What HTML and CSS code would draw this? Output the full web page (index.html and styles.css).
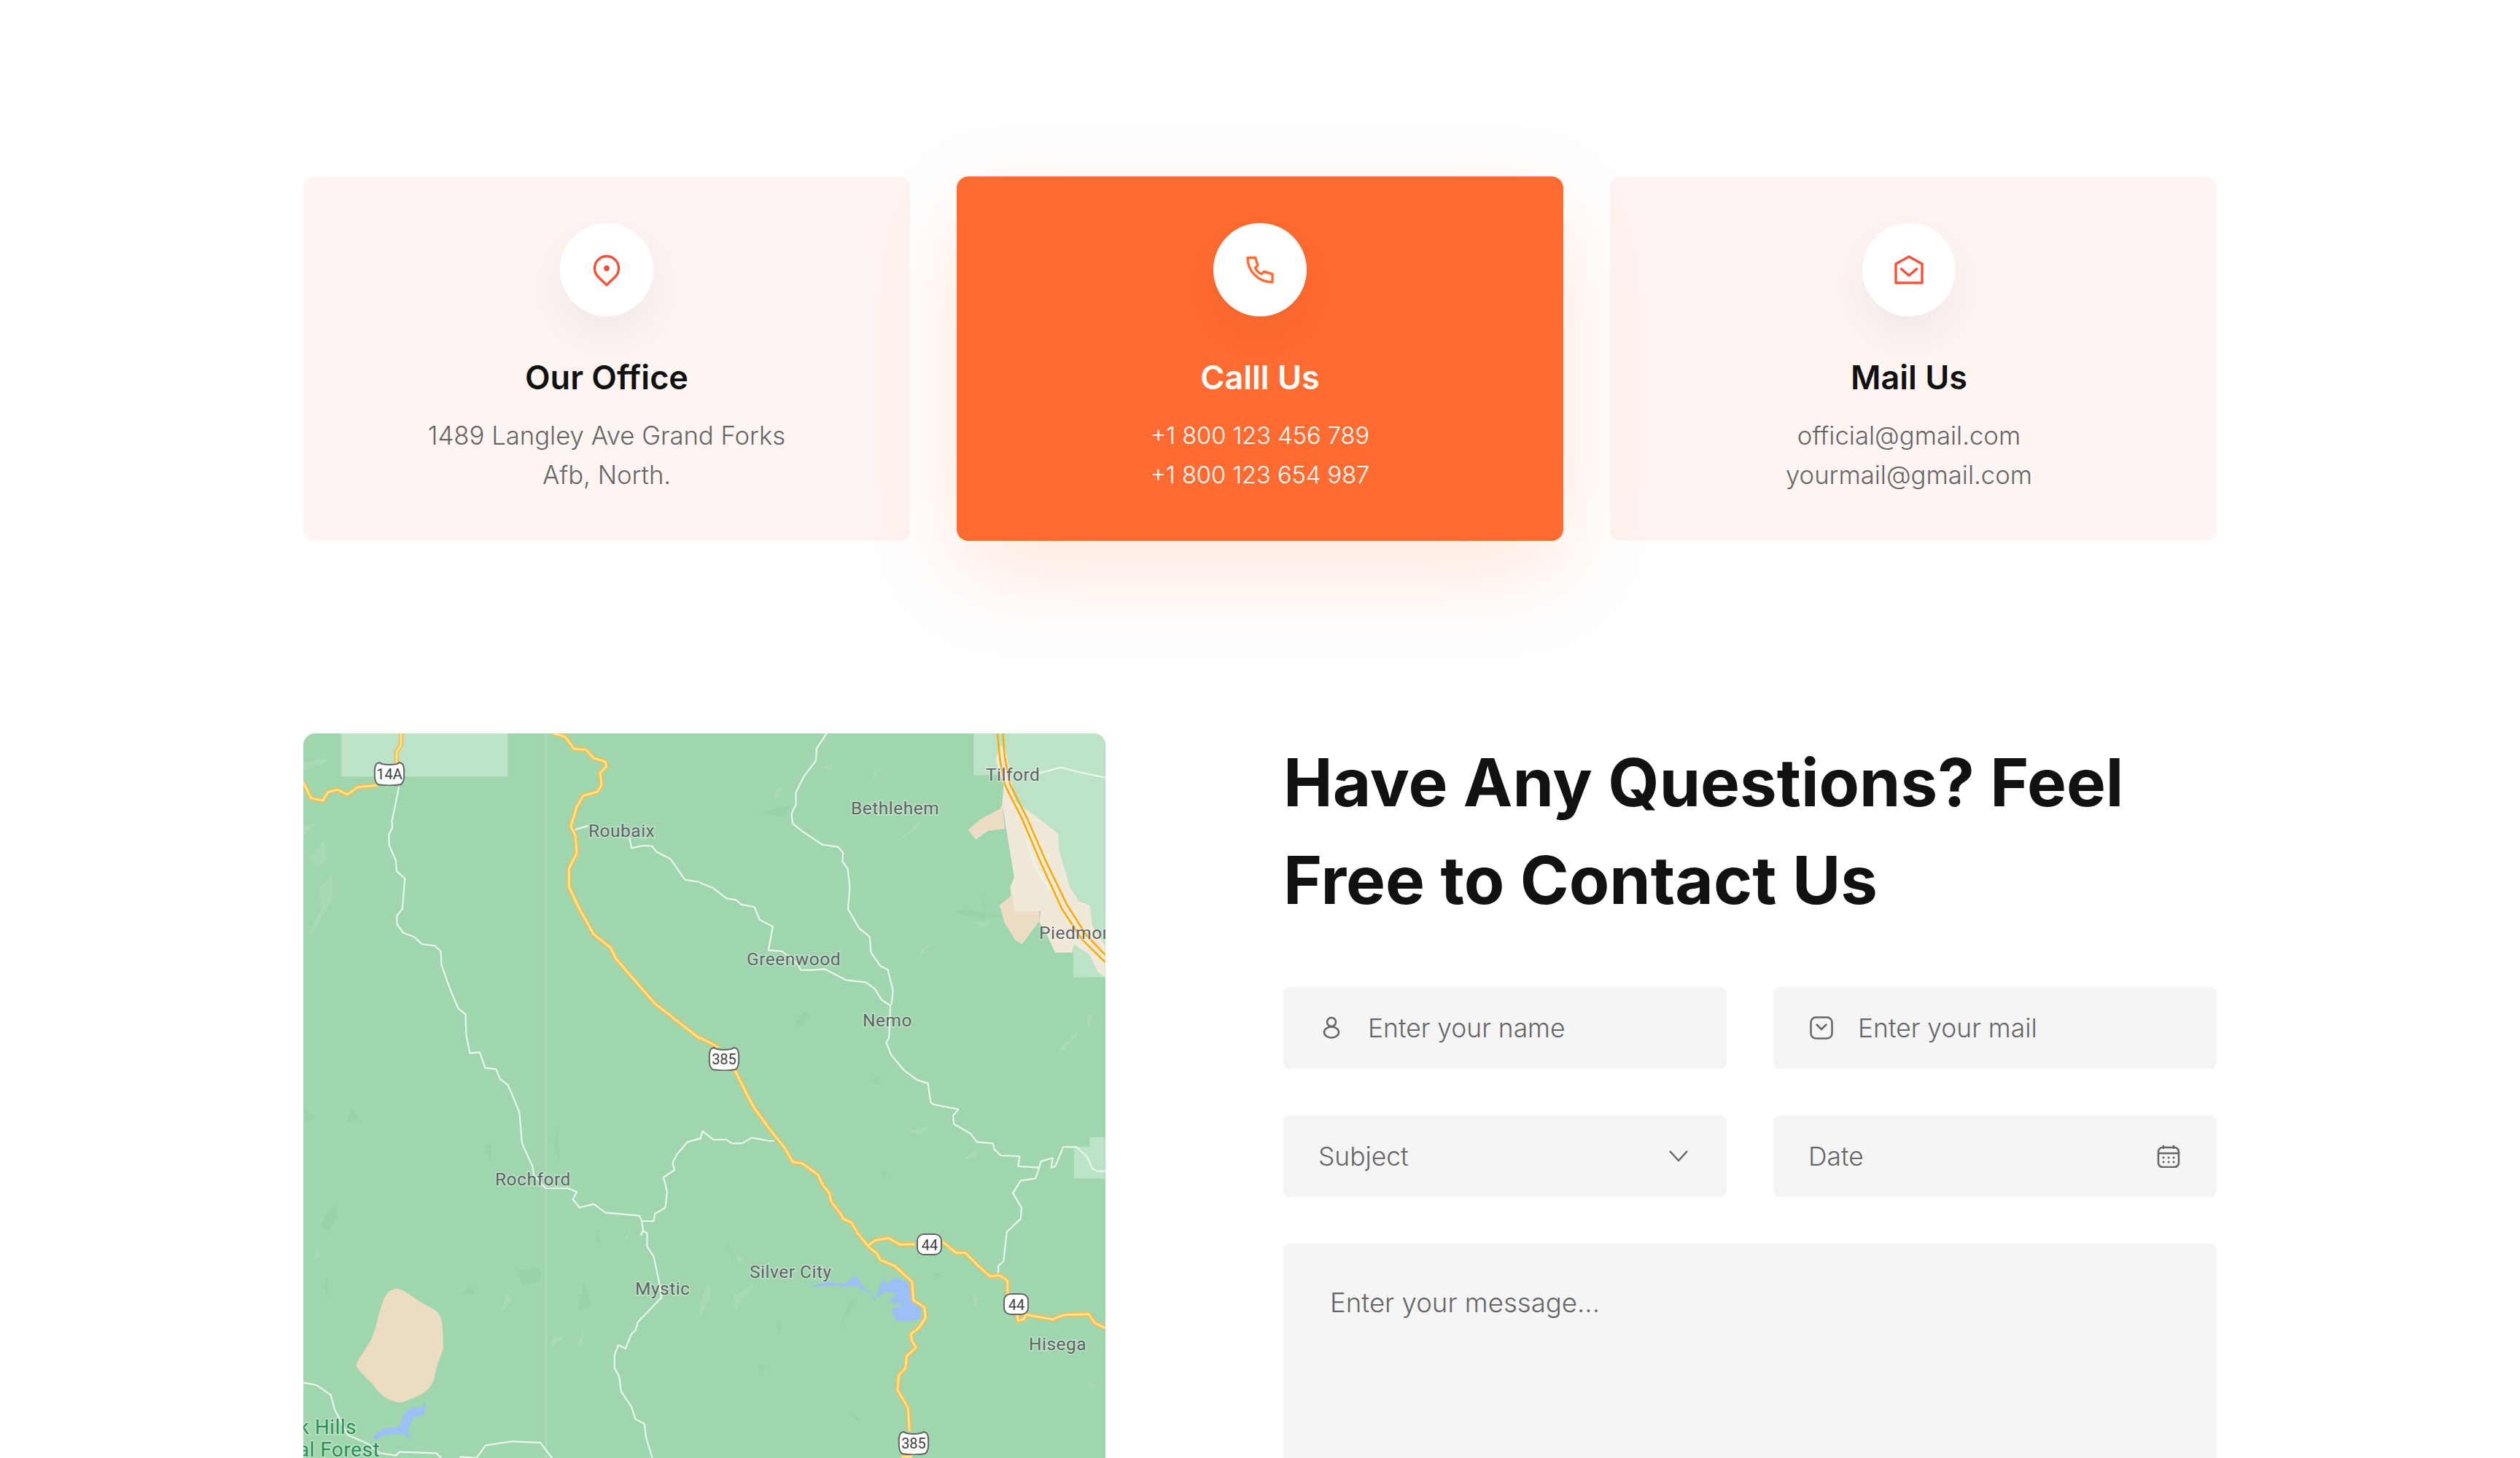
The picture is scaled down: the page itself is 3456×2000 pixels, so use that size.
FILE: index.html

```html
<!doctype html>
<html>
<head>
    <title>Contact</title>
    <meta charset="utf-8" />
    <link rel="stylesheet" href="styles.css">
</head>
<body>
<div id="container">

    <div class="cards">
        <div class="card">
            <div class="circle">
                <svg class="big-icon" viewBox="0 0 48 48"><path d="M24 45 L12.4 33.8 A16.5 16.5 0 1 1 35.6 33.8 Z"/><circle class="dot" cx="24" cy="22" r="4"/></svg>
            </div>
            <h3>Our Office</h3>
            <p>1489 Langley Ave Grand Forks<br />Afb, North.</p>
        </div>
        <div class="card active">
            <div class="circle">
                <svg class="big-icon" viewBox="0 0 48 48"><path d="M7 7.5 H17.5 L21 18 L17.5 21.5 C19 25 23 29 26 30 L29.5 26.5 L41 30 V41 C22 41 7 26 7 7.5 Z"/></svg>
            </div>
            <h3>Calll Us</h3>
            <p>+1 800 123 456 789<br />+1 800 123 654 987</p>
        </div>
        <div class="card last">
            <div class="circle">
                <svg class="big-icon" viewBox="0 0 48 48"><path d="M24 6 L6 16 V42 H42 V16 Z"/><path d="M12.5 22 L24 32 L35.5 22"/></svg>
            </div>
            <h3>Mail Us</h3>
            <p>official@gmail.com<br />yourmail@gmail.com</p>
        </div>
    </div>

    <div class="contact">
        <div class="map">
            <svg viewBox="416 1006 1100 994">
                <defs>
                    <g id="yellow-roads">
                        <g transform="translate(400 990) scale(.3571 .3333)">
                            <path d="M45 250 L75 315 L120 325 L140 290 L175 280 L215 300 L255 268 L330 262"/>
                            <path d="M420 48 L420 95 L403 125 L403 170"/>
                            <path d="M1005 48 L1050 62 L1085 112 L1130 115 L1160 150 L1205 165 L1208 185 L1185 210 L1190 260 L1175 288 L1120 305 L1095 350 L1072 430 L1090 470 L1095 540 L1065 605 L1065 680 L1105 770 L1160 875 L1225 930 L1245 975 L1395 1160 L1568 1305"/>
                        </g>
                        <g transform="translate(960 990) scale(.3636 .3333)">
                            <path d="M0 1300 L70 1340"/>
                            <path d="M130 1430 L175 1530"/>
                        </g>
                        <g transform="translate(960 1500) scale(.3636 .3333)">
                            <path d="M175 0 L205 60 L265 150 L320 225 L350 282 L385 287 L445 335 L465 380 L488 410 L495 445 L530 495 L540 515 L570 530 L595 575 L635 630 L668 660 L680 685 L735 710 L800 775 L805 850 L847 880 L850 925 L825 965 L795 990 L800 1020 L815 1045 L780 1080 L775 1130 L750 1160 L745 1220 L785 1295 L790 1390"/>
                            <path d="M635 625 L660 605 L710 595 L755 622 L810 620"/>
                            <path d="M915 610 L965 655 L1000 655 L1050 710 L1095 753 L1130 748 L1160 770 L1160 830"/>
                            <path d="M1195 910 L1200 935 L1220 930 L1230 910 L1330 930 L1370 912 L1465 908 L1490 945 L1528 965"/>
                            <path d="M760 1495 L800 1495"/>
                        </g>
                    </g>
                    <symbol id="us-shield" viewBox="0 0 44 33">
                        <path d="M4 3 L8 1 L12 3 Q22 5 32 3 L36 1 L40 3 Q43 8 42 16 Q43 26 38 31 Q22 34 6 31 Q1 26 2 16 Q1 8 4 3 Z"/>
                    </symbol>
                </defs>

                <rect class="land" x="416" y="1006" width="1100" height="994"/>

                <!-- top left -->
                <g transform="translate(400 990) scale(.3571 .3333)">
                    <rect class="park" x="190" y="48" width="640" height="178"/>
                    <polygon class="pale" points="45,170 130,150 135,165 45,205"/>
                    <polygon class="pale" points="70,560 125,490 135,570 95,600"/>
                    <polygon class="pale" points="155,625 155,730 75,880 70,860 115,770 105,690"/>
                    <polygon class="pale" points="45,430 100,420 45,465"/>
                </g>
                <!-- top right -->
                <g transform="translate(960 990) scale(.3636 .3333)">
                    <polygon class="park" points="1032,48 1528,48 1528,1052 1408,1052 1408,915 1240,700 1150,220 1032,220"/>
                    <polygon class="town" points="1115,160 1130,100 1150,100 1190,330 1280,400 1350,460 1355,530 1395,680 1430,740 1470,755 1480,840 1528,920 1528,1050 1500,1030 1470,960 1410,915 1405,950 1340,950 1310,880 1280,825 1285,780 1180,780 1170,680 1185,640 1155,440 1140,340 1145,260"/>
                    <polygon class="sand" points="1012,445 1060,400 1130,360 1140,340 1150,440 1085,450 1040,485"/>
                    <polygon class="sand" points="1130,755 1180,710 1185,780 1280,780 1280,820 1240,880 1215,915 1190,900 1150,830"/>
                    <polygon class="pale" points="455,185 505,175 495,205"/>
                    <polygon class="pale" points="655,200 685,198 650,245"/>
                    <polygon class="pale" points="285,280 320,262 280,330"/>
                    <polygon class="dark" points="230,375 345,340 310,390"/>
                    <polygon class="pale" points="790,450 835,400 820,440 720,510"/>
                    <polygon class="dark" points="960,785 1000,770 1140,800 1060,810"/>
                    <polygon class="dark" points="1050,700 1085,770 1070,760"/>
                    <polygon class="pale" points="1030,825 1100,822 1080,852"/>
                    <polygon class="pale" points="835,935 875,910 830,970"/>
                    <polygon class="dark" points="350,1250 395,1190 420,1215 365,1258"/>
                    <polygon class="pale" points="1360,1340 1430,1265 1425,1290 1350,1375"/>
                    <polygon class="pale" points="1458,1210 1485,1200 1465,1265"/>
                    <polygon class="dark" points="640,1470 680,1460 665,1495"/>
                </g>
                <!-- bottom left -->
                <g transform="translate(400 1500) scale(.3571 .3333)">
                    <polygon class="dark" points="205,125 235,55 262,110"/>
                    <polygon class="dark" points="45,60 90,100 50,120"/>
                    <polygon class="dark" points="110,535 170,455 170,510 140,575"/>
                    <polygon class="pale" points="85,690 95,625 108,670"/>
                    <polygon class="dark" points="120,790 135,750 145,850"/>
                    <polygon class="dark" points="650,825 698,795 700,830"/>
                    <polygon class="dark" points="865,730 955,715 955,770 890,790"/>
                    <polygon class="pale" points="805,900 825,820 845,850"/>
                    <polygon class="dark" points="1165,600 1175,555 1190,620"/>
                    <polygon class="pale" points="1275,610 1308,535 1290,600"/>
                    <polygon class="dark" points="1100,895 1120,770 1150,875"/>
                    <polygon class="pale" points="997,1045 1002,1005 1055,995"/>
                    <polygon class="pale" points="1097,1040 1125,955 1115,1045"/>
                    <polygon class="dark" points="740,215 765,205 765,290"/>
                    <polygon class="dark" points="1020,145 1030,300 1005,200"/>
                    <path class="blob" d="M400 803 C440 805 470 850 550 890 C578 915 582 940 582 1050 C570 1090 555 1120 550 1165 C535 1220 510 1240 420 1272 C370 1270 330 1230 315 1200 C290 1170 250 1140 248 1115 C260 1080 300 1040 320 970 C345 880 350 810 400 803 Z"/>
                    <polygon class="water" points="310,1415 350,1380 415,1370 430,1320 460,1290 500,1295 512,1272 518,1280 505,1325 470,1330 445,1380 458,1425 430,1400 350,1408 320,1428"/>
                </g>
                <!-- bottom right -->
                <g transform="translate(960 1500) scale(.3636 .3333)">
                    <polygon class="park" points="1410,350 1528,350 1528,180 1470,180 1470,220 1410,220"/>
                    <polygon class="pale" points="125,840 210,778 135,890"/>
                    <polygon class="pale" points="0,860 35,770 40,840 0,925"/>
                    <polygon class="pale" points="790,155 865,138 825,170"/>
                    <polygon class="pale" points="995,270 1048,228 1040,262"/>
                    <polygon class="dark" points="530,960 565,845 590,850 570,890"/>
                    <polygon class="dark" points="97,600 130,680 115,675"/>
                    <polygon class="pale" points="140,660 165,680 145,705"/>
                    <polygon class="dark" points="875,740 915,735 895,768"/>
                    <polygon class="pale" points="1030,825 1052,850 1035,890"/>
                    <polygon class="pale" points="1465,1190 1510,1200 1465,1220"/>
                    <polygon class="dark" points="222,1145 228,1110 248,1135"/>
                    <polygon class="dark" points="560,1320 580,1315 615,1360"/>
                    <polygon class="dark" points="290,935 310,935 300,1000"/>
                    <polygon class="dark" points="683,310 710,325 685,350"/>
                    <polygon class="water" points="405,760 430,790 480,775 540,785 590,750 610,790 665,845 680,790 695,760 705,790 735,755 785,780 800,850 835,880 830,930 750,940 725,910 725,885 770,870 710,855 745,825 700,815 660,850 640,825 585,790 540,795 480,790 430,795"/>
                </g>

                <!-- county line -->
                <path class="boundary" d="M749 1006 V2000"/>

                <!-- small roads -->
                <g class="road-white">
                    <g transform="translate(400 990) scale(.3571 .3333)">
                        <path d="M412 268 L385 410 L387 435 L373 465 L375 510 L400 570 L403 615 L435 645 L425 770 L403 800 L405 835 L430 870 L470 885 L500 915 L550 922 L573 945 L575 1000 L610 1105 L640 1180 L668 1205 L670 1290 L685 1365 L722 1360 L743 1425 L785 1430 L800 1470 L830 1495 L845 1530"/>
                        <path d="M1088 445 L1140 428"/>
                        <path d="M1297 475 L1305 520 L1350 510 L1385 512 L1400 535 L1455 565 L1510 650 L1568 660"/>
                    </g>
                    <g transform="translate(960 990) scale(.3636 .3333)">
                        <path d="M478 48 L440 110 L437 160 L392 225 L362 290 L362 340 L345 380 L350 420 L385 450 L460 505 L520 515 L540 540 L537 575 L557 605 L565 680 L558 770 L600 850 L640 885 L645 950 L680 1005 L708 1020 L728 1105 L722 1165"/>
                        <path d="M0 662 L50 685 L100 727 L135 733 L155 752 L205 762 L225 815 L275 843 L258 940 L310 945 L370 1000 L380 1022 L425 1022 L470 1018 L550 1063 L625 1072 L660 1100 L685 1145 L718 1168 L713 1300 L703 1320 L720 1370 L770 1435 L820 1475 L860 1488 L865 1530"/>
                        <path d="M1280 212 L1360 188 L1420 205 L1528 230"/>
                        <path d="M1235 490 L1265 600 L1320 690"/>
                    </g>
                    <g transform="translate(400 1500) scale(.3571 .3333)">
                        <path d="M845 0 L875 80 L885 205 L910 265 L925 300 L930 335 L975 390 L1060 390 L1095 405 L1080 435 L1105 470 L1160 455 L1205 490 L1335 503 L1345 525 L1390 525 L1395 495 L1435 470 L1442 405 L1428 345 L1470 315 L1463 285 L1480 250 L1520 200 L1568 185"/>
                        <path d="M1345 525 L1350 565 L1340 585 M1350 565 L1365 575 L1365 630 L1390 670 L1410 770 L1420 840 L1330 940 L1320 975 L1305 990 L1295 1015 L1282 1050 L1255 1035 L1240 1075 L1240 1130 L1258 1165 L1265 1225 L1305 1290 L1320 1340 L1355 1360 L1360 1410 L1385 1500"/>
                        <path d="M45 1190 L95 1200 L150 1240 L165 1300 L215 1405 L290 1440 L340 1480 L400 1490 L415 1475 L555 1480 L575 1500"/>
                        <path d="M645 1495 L710 1500 L745 1448 L845 1432 L955 1437 L1000 1500"/>
                    </g>
                    <g transform="translate(960 1500) scale(.3636 .3333)">
                        <path d="M0 190 L10 155 L50 190 L100 190 L120 205 L160 205 L195 182 L260 195 L280 195"/>
                        <path d="M865 0 L870 35 L880 45 L975 65 L955 90 L957 125 L1020 165 L1045 200 L1105 205 L1110 230 L1135 255 L1205 258 L1200 300 L1280 305 L1265 350 L1210 358 L1180 410 L1213 470 L1210 515 L1157 570 L1145 690 L1125 710 L1125 745"/>
                        <path d="M1280 305 L1285 280 L1330 265 L1325 305 L1340 300 L1370 220 L1420 220 L1460 260 L1480 310 L1500 320 L1528 320"/>
                    </g>
                </g>

                <!-- big roads -->
                <use href="#yellow-roads" class="road-out"/>
                <use href="#yellow-roads" class="road-in"/>
                <g class="highway" transform="translate(960 990) scale(.3636 .3333)">
                    <path d="M1122 48 L1132 160 L1150 260 L1215 400 L1285 580 L1365 770 L1440 895 L1528 990"/>
                    <path d="M1142 48 L1150 150 L1170 260 L1235 400 L1305 575 L1385 755 L1455 875 L1528 960"/>
                </g>

                <text class="map-label" x="807" y="1148">Roubaix</text>
                <text class="map-label" x="1167" y="1117">Bethlehem</text>
                <text class="map-label" x="1352" y="1071">Tilford</text>
                <text class="map-label" x="1425" y="1288">Piedmont</text>
                <text class="map-label" x="1024" y="1324">Greenwood</text>
                <text class="map-label" x="1183" y="1408">Nemo</text>
                <text class="map-label" x="679" y="1626">Rochford</text>
                <text class="map-label" x="871" y="1776">Mystic</text>
                <text class="map-label" x="1028" y="1753">Silver City</text>
                <text class="map-label" x="1411" y="1852">Hisega</text>
                <text class="forest-label" x="489" y="1967">Black Hills</text>
                <text class="forest-label" x="521" y="1998">National Forest</text>

                <use href="#us-shield" class="shield" x="512" y="1045" width="44" height="33"/>
                <text class="shield-text" x="534" y="1069">14A</text>
                <use href="#us-shield" class="shield" x="971" y="1436" width="44" height="33"/>
                <text class="shield-text" x="993" y="1460">385</text>
                <use href="#us-shield" class="shield" x="1231" y="1963" width="44" height="33"/>
                <text class="shield-text" x="1253" y="1987">385</text>
                <rect class="shield" x="1258" y="1693" width="33" height="28" rx="9"/>
                <text class="shield-text" x="1275" y="1715">44</text>
                <rect class="shield" x="1377" y="1775" width="33" height="28" rx="9"/>
                <text class="shield-text" x="1394" y="1797">44</text>
            </svg>
        </div>

        <div class="form-side">
            <h1>Have Any Questions? Feel<br />Free to Contact Us</h1>
            <div class="form">
                <div class="field with-icon">
                    <svg class="field-icon" viewBox="0 0 32 32"><circle cx="16" cy="8" r="6"/><ellipse cx="16" cy="22" rx="10" ry="7.5"/></svg>
                    <span>Enter your name</span>
                </div>
                <div class="field with-icon">
                    <svg class="field-icon" viewBox="0 0 32 32"><rect x="1.5" y="1.5" width="29" height="29" rx="7"/><path d="M9 11 L16 18 L23 11"/></svg>
                    <span>Enter your mail</span>
                </div>
                <div class="field between">
                    <span>Subject</span>
                    <svg class="field-end" viewBox="0 0 32 32"><path d="M4 9 L16 22 L28 9"/></svg>
                </div>
                <div class="field between">
                    <span>Date</span>
                    <svg class="field-end" viewBox="0 0 32 32"><rect x="2" y="4" width="28" height="27" rx="6"/><path d="M2 12 H30 M9 1 V6 M23 1 V6"/><path class="cal-dots" d="M9 18 h.1 M16 18 h.1 M23 18 h.1 M9 24 h.1 M16 24 h.1 M23 24 h.1"/></svg>
                </div>
                <div class="message">Enter your message...</div>
            </div>
        </div>
    </div>

</div>
</body>
</html>
```

FILE: styles.css

```css
html, body {
    height: 2000px;
    overflow: hidden;
}
body {
    margin: 0;
    background: #fff;
    font-family: Inter, "Open Sans", sans-serif;
    color: #666;
}
#container {
    width: 2624px;
    margin: 0 auto;
    padding-top: 242px;
}

/* top cards */
.cards {
    display: flex;
    gap: 64px;
}
.card {
    width: 832px;
    height: 500px;
    box-sizing: border-box;
    padding-top: 64px;
    background: #fef4f1;
    border-radius: 16px;
    text-align: center;
}
.card.last {
    padding-right: 12px;
}
.card.active {
    position: relative;
    z-index: 1;
    background: #ff6b30;
    color: #fff;
    box-shadow: 0 44px 132px -8px rgba(255, 107, 48, .19);
}
.circle {
    width: 128px;
    height: 128px;
    margin: 0 auto;
    display: flex;
    align-items: center;
    justify-content: center;
    border-radius: 50%;
    background: #fff;
    box-shadow: 0 24px 64px rgba(0, 0, 0, .06);
}
.big-icon {
    width: 48px;
    height: 48px;
    fill: none;
    stroke: #f5523a;
    stroke-width: 3.4;
    stroke-linejoin: round;
}
.active .big-icon {
    stroke: #ff6b30;
}
.big-icon .dot {
    fill: #f5523a;
    stroke: none;
}
.card h3 {
    margin: 54px 0 22px;
    font-size: 45px;
    line-height: 60px;
    font-weight: 600;
    color: #111;
}
.card.active h3 {
    color: #fff;
}
.card p {
    margin: 0;
    font-size: 34.7px;
    line-height: 54px;
    font-weight: 300;
}
.card.active p {
    font-size: 32.6px;
}

/* map + form */
.contact {
    display: flex;
    justify-content: space-between;
    margin-top: 264px;
}
.map {
    width: 1100px;
    height: 994px;
    border-radius: 16px 16px 0 0;
    overflow: hidden;
}
.map svg {
    display: block;
    width: 1100px;
    height: 994px;
}
.map path, .map polygon {
    vector-effect: non-scaling-stroke;
}
.land { fill: #9fd6ae; }
.park { fill: #bce3c8; }
.town { fill: #f0e8d8; }
.sand, .blob { fill: #ecdcc4; }
.water { fill: #9cbff5; }
.pale { fill: #a8dab6; }
.dark { fill: #99d1a8; }
.boundary {
    fill: none;
    stroke: #b5dfc1;
    stroke-width: 1.5;
}
.road-white {
    fill: none;
    stroke: #eaf6ed;
    stroke-width: 2.2;
    stroke-linejoin: round;
}
.road-out {
    fill: none;
    stroke: #f8bb4a;
    stroke-width: 6.5;
    stroke-linejoin: round;
}
.road-in {
    fill: none;
    stroke: #fde59a;
    stroke-width: 2.8;
    stroke-linejoin: round;
}
.highway {
    fill: none;
    stroke: #f9ab00;
    stroke-width: 2.5;
}
.map-label {
    font-family: Roboto, sans-serif;
    font-size: 24.5px;
    letter-spacing: .5px;
    fill: #5f6368;
    stroke: rgba(255, 255, 255, .35);
    stroke-width: 3px;
    paint-order: stroke;
}
.forest-label {
    font-family: Roboto, sans-serif;
    font-size: 28px;
    letter-spacing: .5px;
    text-anchor: end;
    fill: #2b9053;
    stroke: rgba(255, 255, 255, .35);
    stroke-width: 3px;
    paint-order: stroke;
}
.shield {
    fill: #fff;
    stroke: #666;
    stroke-width: 2;
}
.shield-text {
    font-family: Roboto, sans-serif;
    font-size: 20px;
    text-anchor: middle;
    fill: #3c4043;
}

.form-side {
    width: 1280px;
}
h1 {
    margin: 0 0 80px;
    font-size: 90.6px;
    line-height: 134px;
    font-weight: 700;
    color: #111;
}
.form {
    display: grid;
    grid-template-columns: 608px 608px;
    gap: 64px;
}
.field {
    height: 112px;
    box-sizing: border-box;
    padding: 0 50px 0 48px;
    display: flex;
    align-items: center;
    gap: 36px;
    background: #f5f5f5;
    border-radius: 8px;
    font-size: 35.4px;
    font-weight: 300;
}
.field.with-icon {
    padding-left: 50px;
    gap: 34px;
}
.field.between {
    justify-content: space-between;
}
.field-icon, .field-end {
    width: 32px;
    height: 32px;
    fill: none;
    stroke: #666;
    stroke-width: 2.5;
    flex: none;
}
.cal-dots {
    stroke-linecap: round;
    stroke-width: 3;
}
.message {
    grid-column: 1 / 3;
    height: 420px;
    box-sizing: border-box;
    padding: 60px 64px;
    background: #f5f5f5;
    border-radius: 8px;
    font-size: 36.6px;
    line-height: 42px;
    font-weight: 300;
}
```
